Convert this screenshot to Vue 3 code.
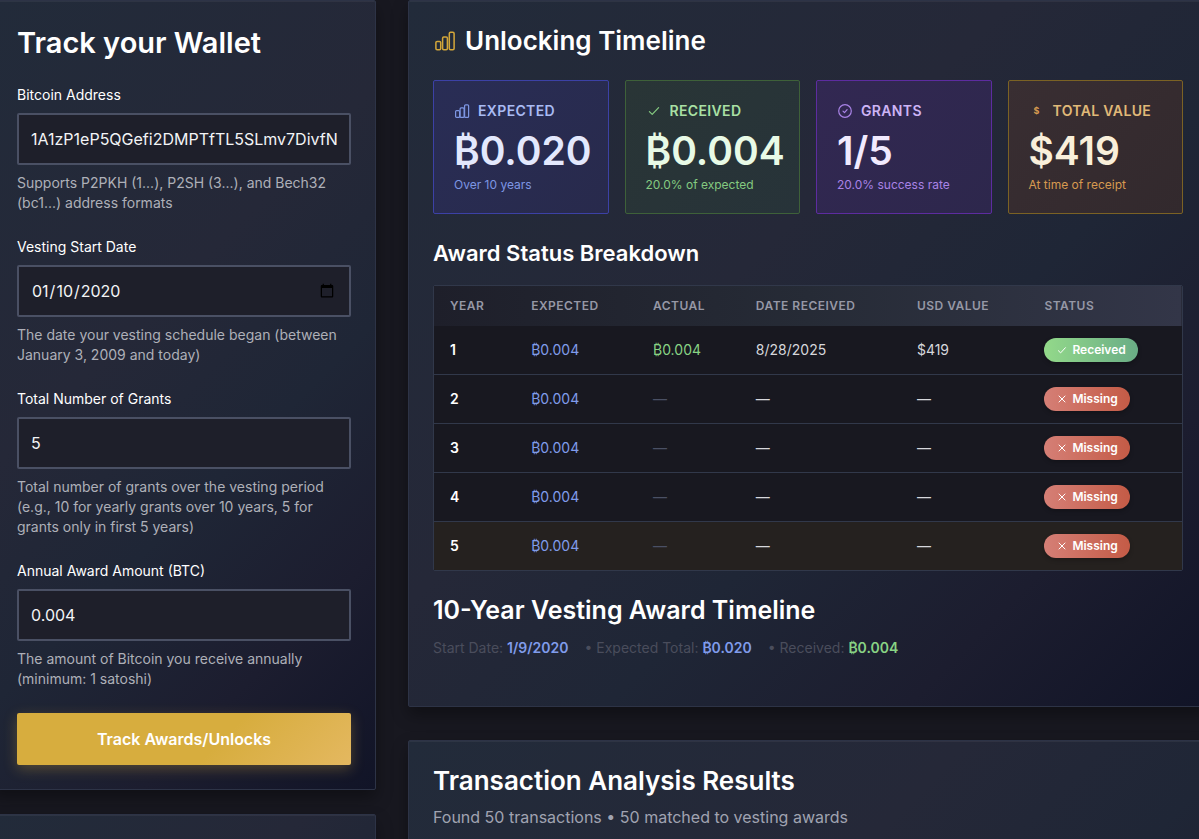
<script setup>
import { ref } from 'vue'

const address = ref('1A1zP1eP5QGefi2DMPTfTL5SLmv7DivfNa')
const startDate = ref('2020-01-10')
const grants = ref('5')
const amount = ref('0.004')

const stats = [
  { kind: 'expected', icon: 'bars', label: 'Expected', value: '₿0.020', note: 'Over 10 years' },
  { kind: 'received', icon: 'check', label: 'Received', value: '₿0.004', note: '20.0% of expected' },
  { kind: 'grants', icon: 'badge', label: 'Grants', value: '1/5', note: '20.0% success rate' },
  { kind: 'total', icon: 'dollar', label: 'Total Value', value: '$419', note: 'At time of receipt' },
]

const rows = [
  { year: 1, expected: '₿0.004', actual: '₿0.004', date: '8/28/2025', usd: '$419', received: true },
  { year: 2, expected: '₿0.004', actual: '—', date: '—', usd: '—', received: false },
  { year: 3, expected: '₿0.004', actual: '—', date: '—', usd: '—', received: false },
  { year: 4, expected: '₿0.004', actual: '—', date: '—', usd: '—', received: false },
  { year: 5, expected: '₿0.004', actual: '—', date: '—', usd: '—', received: false },
]
</script>

<template>
  <div class="page">
    <main class="layout">
      <div class="side">
        <section class="card">
          <h2 class="form-title">Track your Wallet</h2>
          <form class="form" @submit.prevent>
            <div class="field">
              <label for="address">Bitcoin Address</label>
              <input id="address" v-model="address" type="text" />
              <p>Supports P2PKH (1...), P2SH (3...), and Bech32 (bc1...) address formats</p>
            </div>
            <div class="field">
              <label for="start">Vesting Start Date</label>
              <input id="start" v-model="startDate" type="date" />
              <p>The date your vesting schedule began (between January 3, 2009 and today)</p>
            </div>
            <div class="field">
              <label for="grants">Total Number of Grants</label>
              <input id="grants" v-model="grants" type="text" inputmode="numeric" />
              <p>Total number of grants over the vesting period (e.g., 10 for yearly grants over 10 years, 5 for grants only in first 5 years)</p>
            </div>
            <div class="field">
              <label for="amount">Annual Award Amount (BTC)</label>
              <input id="amount" v-model="amount" type="text" inputmode="decimal" />
              <p>The amount of Bitcoin you receive annually (minimum: 1 satoshi)</p>
            </div>
            <button class="submit" type="submit">Track Awards/Unlocks</button>
          </form>
        </section>
        <section class="card next"></section>
      </div>

      <div class="content">
        <section class="card timeline">
          <h2 class="title">
            <svg class="title-icon" viewBox="0 0 24 24" aria-hidden="true">
              <rect x="2.9" y="12.4" width="4.8" height="8.4" rx="1.2" />
              <rect x="9.6" y="8" width="4.8" height="12.8" rx="1.2" />
              <rect x="16.3" y="3.2" width="4.8" height="17.6" rx="1.2" />
            </svg>
            Unlocking Timeline
          </h2>

          <div class="stats">
            <article v-for="s in stats" :key="s.kind" class="stat" :class="s.kind">
              <h3 class="stat-label">
                <svg v-if="s.icon === 'bars'" viewBox="0 0 16 16" aria-hidden="true">
                  <rect x="1.6" y="7.6" width="4" height="6.8" rx="1" />
                  <rect x="6.1" y="4.9" width="4" height="9.5" rx="1" />
                  <rect x="10.6" y="1.8" width="4" height="12.6" rx="1" />
                </svg>
                <svg v-else-if="s.icon === 'check'" viewBox="0 0 16 16" aria-hidden="true">
                  <path d="M3.4 8.6l2.8 2.8 6.4-6.8" />
                </svg>
                <svg v-else-if="s.icon === 'badge'" viewBox="0 0 16 16" aria-hidden="true">
                  <circle cx="8" cy="8" r="6.3" />
                  <path d="M6 8.1l1.5 1.5 2.6-3" />
                </svg>
                <span v-else class="dollar">$</span>
                {{ s.label }}
              </h3>
              <strong>{{ s.value }}</strong>
              <p>{{ s.note }}</p>
            </article>
          </div>

          <h3 class="subtitle">Award Status Breakdown</h3>
          <div class="table-wrap">
            <table>
              <thead>
                <tr>
                  <th>Year</th>
                  <th>Expected</th>
                  <th>Actual</th>
                  <th>Date Received</th>
                  <th>USD Value</th>
                  <th>Status</th>
                </tr>
              </thead>
              <tbody>
                <tr v-for="r in rows" :key="r.year">
                  <td class="year">{{ r.year }}</td>
                  <td class="blue">{{ r.expected }}</td>
                  <td :class="r.received ? 'green' : 'dim'">{{ r.actual }}</td>
                  <td>{{ r.date }}</td>
                  <td>{{ r.usd }}</td>
                  <td>
                    <span class="pill" :class="r.received ? 'ok' : 'bad'">
                      <svg viewBox="0 0 12 12" aria-hidden="true">
                        <path v-if="r.received" d="M2.4 6.7l2.2 2.2 4.8-5.2" />
                        <path v-else d="M3 3l6 6M9 3l-6 6" />
                      </svg>
                      {{ r.received ? 'Received' : 'Missing' }}
                    </span>
                  </td>
                </tr>
              </tbody>
            </table>
          </div>

          <h2 class="title vesting">10-Year Vesting Award Timeline</h2>
          <p class="summary">
            <span>Start Date: <b class="blue">1/9/2020</b></span>
            <span>• Expected Total: <b class="blue">₿0.020</b></span>
            <span>• Received: <b class="green">₿0.004</b></span>
          </p>
        </section>

        <section class="card results">
          <h2 class="title">Transaction Analysis Results</h2>
          <p>Found 50 transactions • 50 matched to vesting awards</p>
        </section>
      </div>
    </main>
  </div>
</template>

<style>
body {
  margin: 0;
  background: #181820;
}
</style>

<style scoped>
.page {
  height: 100vh;
  overflow: hidden;
  background: #181820;
  color: #fff;
  font-family: Inter, "Noto Sans", sans-serif;
  font-size: 14px;
  line-height: 20px;
}
.page * {
  box-sizing: border-box;
}
h2, h3, p {
  margin: 0;
}
.layout {
  display: grid;
  grid-template-columns: repeat(12, minmax(0, 1fr));
  gap: 32px;
  margin: 0 -9px 0 -8px;
}
.side {
  grid-column: span 4;
  display: flex;
  flex-direction: column;
  gap: 24px;
}
.content {
  grid-column: span 8;
  display: flex;
  flex-direction: column;
  gap: 33px;
}
.card {
  padding: 24px;
  border: 1px solid #2d3346;
  border-radius: 2px;
  background: linear-gradient(135deg, #222b3a 0%, #252838 40%, #1f2636 60%, #1c1d2f 80%, #111427 100%);
  box-shadow: 0 8px 16px rgba(0, 0, 0, 0.35), inset 0 1px 0 rgba(255, 255, 255, 0.05);
}
.next {
  min-height: 400px;
}
.form-title {
  margin-bottom: 24px;
  font-size: 29px;
  line-height: 36px;
  font-weight: 600;
}
.form,
.field {
  display: flex;
  flex-direction: column;
}
.form {
  gap: 24px;
}
.field {
  gap: 8px;
}
.field input {
  width: 100%;
  height: 52px;
  padding: 0 12px;
  border: 2px solid #4a5064;
  border-radius: 2px;
  background: #1e1f2a;
  color: #f3f4f6;
  font-family: inherit;
  font-size: 16px;
}
.field p {
  color: #aeb0b8;
}
.submit {
  height: 52px;
  border: 0;
  border-radius: 2px;
  background: linear-gradient(135deg, #d7ad3e 0%, #d7ad3e 60%, #e4b860 100%);
  box-shadow: 0 4px 14px rgba(215, 173, 62, 0.3);
  color: #fff;
  font-family: inherit;
  font-size: 16px;
  font-weight: 600;
}
.title {
  display: flex;
  align-items: center;
  gap: 8px;
  font-size: 26px;
  line-height: 31px;
  font-weight: 600;
}
.title-icon {
  width: 24px;
  height: 24px;
  fill: none;
  stroke: #d4a73a;
  stroke-width: 1.5;
}
.stats {
  display: grid;
  grid-template-columns: repeat(4, minmax(0, 1fr));
  gap: 16px;
  margin-top: 24px;
}
.stat {
  padding: 20px;
  border: 1px solid;
  border-radius: 2px;
}
.stat-label {
  display: flex;
  align-items: center;
  gap: 8px;
  font-size: 14px;
  line-height: 20px;
  font-weight: 600;
  letter-spacing: 0.025em;
  text-transform: uppercase;
}
.stat-label svg {
  width: 16px;
  height: 16px;
  fill: none;
  stroke: currentColor;
  stroke-width: 1.2;
  stroke-linecap: round;
  stroke-linejoin: round;
}
.dollar {
  width: 16px;
  font-size: 9px;
  font-weight: 700;
  text-align: center;
}
.stat strong {
  display: block;
  margin: 8px 0 4px;
  font-size: 39px;
  line-height: 44px;
  font-weight: 600;
}
.stat p {
  font-size: 12px;
  line-height: 16px;
}
.expected { background: linear-gradient(135deg, #292d55, #282a4c); border-color: #3c41a6; }
.expected .stat-label { color: #a9bbf3; }
.expected strong { color: #e3e8fd; }
.expected p, .expected svg { color: #7d96e3; }
.received { background: linear-gradient(135deg, #293536, #273339); border-color: #3e6139; }
.received .stat-label { color: #a9e0a4; }
.received strong { color: #e8fae6; }
.received p, .received svg { color: #84ca80; }
.grants { background: linear-gradient(135deg, #322852, #2d274c); border-color: #5d2ca0; }
.grants .stat-label { color: #cdb4f5; }
.grants strong { color: #f1eafe; }
.grants p, .grants svg { color: #a983e6; }
.total { background: linear-gradient(135deg, #392e32, #32292d); border-color: #7b6224; }
.total .stat-label { color: #e0b978; }
.total strong { color: #f9efda; }
.total p, .total .dollar { color: #d69a50; }
.subtitle {
  margin: 26px 0 19px;
  font-size: 22px;
  line-height: 26px;
  font-weight: 600;
}
.table-wrap {
  border: 1px solid #31384a;
  border-radius: 2px;
  overflow: hidden;
}
table {
  width: 100%;
  border-collapse: separate;
  border-spacing: 0;
  background: #181820;
}
thead {
  background: linear-gradient(90deg, #1e1f2a, #262b36 50%, #333648);
}
th {
  padding: 12px 16px;
  color: #9698a6;
  font-size: 12px;
  line-height: 16px;
  font-weight: 600;
  letter-spacing: 0.04em;
  text-align: left;
  text-transform: uppercase;
  white-space: nowrap;
}
td {
  height: 49px;
  padding: 0 16px;
  border-bottom: 1px solid #31384a;
  color: #d6d7dc;
}
tbody tr:last-child {
  background: #25211f;
}
tbody tr:last-child td {
  height: 48px;
  border-bottom: 0;
}
td.year { color: #fff; font-weight: 600; }
.blue, td.blue { color: #809ceb; }
.green, td.green { color: #88d384; }
td.dim { color: #4a5064; }
.pill {
  display: inline-flex;
  align-items: center;
  gap: 4px;
  height: 24px;
  padding: 0 12px;
  border-radius: 12px;
  box-shadow: 0 2px 4px rgba(0, 0, 0, 0.25);
  color: #fff;
  font-size: 12px;
  font-weight: 600;
  vertical-align: middle;
}
.pill svg {
  width: 12px;
  height: 12px;
  fill: none;
  stroke: currentColor;
  stroke-linecap: round;
  stroke-linejoin: round;
}
.ok { background: linear-gradient(90deg, #93d98a, #6aad86); }
.bad { background: linear-gradient(90deg, #d57f76, #c45b46); }
.vesting {
  margin-top: 24px;
  font-size: 25px;
}
.summary {
  display: flex;
  gap: 16px;
  margin: 12px 0 24px;
  color: #4a4d5c;
}
.summary b {
  font-weight: 600;
}
.results {
  min-height: 600px;
}
.results p {
  margin-top: 8px;
  color: #a0a3b1;
  font-size: 16px;
  line-height: 26px;
}
</style>
